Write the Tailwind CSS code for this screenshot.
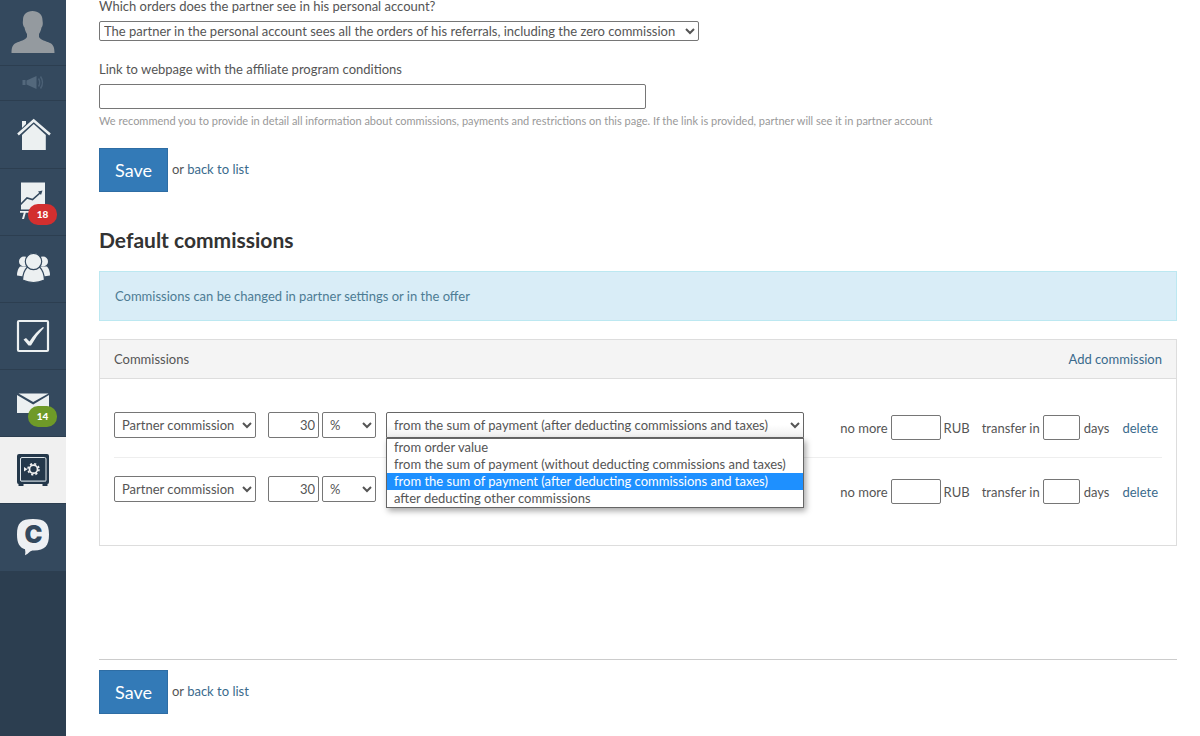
<!DOCTYPE html>
<html lang="en">
<head>
  <meta charset="UTF-8" />
  <meta name="viewport" content="width=device-width, initial-scale=1.0"/>
  <title>Affiliate program settings</title>
  <script src="https://cdn.jsdelivr.net/npm/@tailwindcss/browser@4"></script>
</head>
<body class="flex min-h-screen bg-white font-['Lato',sans-serif] text-[13px] leading-5 text-[#555]">

  <!-- Sidebar -->
  <nav class="w-[66px] shrink-0 bg-[#2c3e50]" aria-label="Main menu">
    <a href="#" aria-label="Profile" class="block h-[66px] border-b border-[#2c3e50] bg-[#34495e]">
      <svg class="h-[65px] w-[66px]" viewBox="0 0 66 65" fill="#949a9f">
        <path d="M32.500 11c-6 0-9.500 3.500-9.500 9 0 1-.3 2-.2 3 .2 2 .8 3.500 1.700 4.500.5 3 1.500 5 2.500 6.500v3c-1.500 3-7 4-11 6-3 1.500-4.500 4-4.500 10h43c0-6-1.500-8.500-4.500-10-4-2-9.500-3-11-6v-3c1-1.500 2-3.500 2.500-6.500.9-1 1.300-2.500 1.300-4.500 0-1-.3-2-.3-3 0-5.500-4-9-10-9z"/>
      </svg>
    </a>
    <a href="#" aria-label="News" class="block h-[35px] border-b border-[#2c3e50] bg-[#34495e]">
      <svg class="h-[34px] w-[66px]" viewBox="0 0 66 34" fill="#53687c">
        <path d="M22.500 14h3v5h-3zM26.500 14.500l10-4.500v13l-10-4.500z"/>
        <path d="M38.500 12.500q2.500 4 0 8M40.500 10.500q4 6 0 12" fill="none" stroke="#4b6075" stroke-width="1.500"/>
      </svg>
    </a>
    <a href="#" aria-label="Home" class="block h-[68px] border-b border-[#2c3e50] bg-[#34495e]">
      <svg class="h-[66px] w-[66px]" viewBox="0 1 66 66" fill="#ecf0f1">
        <path d="M22 21h4v3l-4 4z"/>
        <path d="M22 35L33.700 24 45.800 35V50H22z"/>
        <path d="M18 34.500L33.700 20.500 50 34.500" fill="none" stroke="#ecf0f1" stroke-width="2.500"/>
      </svg>
    </a>
    <a href="#" aria-label="Statistics, 18 new" class="relative block h-[67px] border-b border-[#2c3e50] bg-[#34495e]">
      <svg class="h-[66px] w-[66px]" viewBox="0 1 66 66">
        <path d="M21 14.500h24v27H21zM20 43h14v1.800H20zM24 44h2l-2 7h-2z" fill="#ecf0f1"/>
        <path d="M20.500 36.500L27 30l5.500 1.500L40 25" fill="none" stroke="#34495e" stroke-width="1.600"/>
        <path d="M38 23.500l4.500-1-1.500 4.500z" fill="#34495e"/>
      </svg>
      <span class="absolute top-[35px] left-7 h-[21px] w-[29px] rounded-[10px] bg-[#d32f2f] text-center text-[10px] leading-[21px] font-black text-white">18</span>
    </a>
    <a href="#" aria-label="Users" class="block h-[67px] border-b border-[#2c3e50] bg-[#34495e]">
      <svg class="h-[66px] w-[66px]" viewBox="0 1 66 66" fill="#ecf0f1">
        <circle cx="24" cy="26.500" r="5"/>
        <circle cx="43" cy="26.500" r="5"/>
        <path d="M20 31.500h7v10.500l-10-1.500q0-6 3-9zM47 31.500h-7v10.500l10-1.500q0-6-3-9z"/>
        <g stroke="#34495e" stroke-width="1.200">
          <path d="M27 32.500h13q4 4 4.500 12.500-11 5-22 0 .5-8.500 4.500-12.500z"/>
          <circle cx="33.500" cy="26.500" r="8.200"/>
        </g>
      </svg>
    </a>
    <a href="#" aria-label="Tasks" class="block h-[67px] border-b border-[#2c3e50] bg-[#34495e]">
      <svg class="h-[66px] w-[66px]" viewBox="0 1 66 66" fill="#ecf0f1">
        <rect x="18" y="19" width="30" height="30" rx="1" fill="none" stroke="#ecf0f1" stroke-width="2.200"/>
        <path d="M23.500 37.500l2.500-1.500 3.500 3.500q6-9.500 13.500-14.500l1 .8q-7.500 7.500-13 17.700h-2.500z"/>
      </svg>
    </a>
    <a href="#" aria-label="Messages, 14 new" class="relative block h-[67px] border-b border-[#2c3e50] bg-[#34495e]">
      <svg class="h-[66px] w-[66px]" viewBox="0 1 66 66" fill="#ecf0f1">
        <path d="M18.500 24.500h30L33.200 33z"/>
        <path d="M17 26l16.200 9.500L49 26V44H17z"/>
      </svg>
      <span class="absolute top-[36px] left-7 h-[21px] w-[29px] rounded-[10px] bg-[#6f9a28] text-center text-[10px] leading-[21px] font-black text-white">14</span>
    </a>
    <a href="#" aria-label="Finance" aria-current="page" class="block h-[67px] border-b border-[#2c3e50] bg-[#f0f0f0]">
      <svg class="h-[66px] w-[66px]" viewBox="0 1 66 66">
        <path d="M19 18h28q2 0 2 2v26q0 2-1.500 2v2h-5v-2h-19v2h-5v-2q-1.500 0-1.500-2V20q0-2 2-2z" fill="#24384b"/>
        <rect x="20.500" y="21.500" width="25.500" height="24" rx="1.500" fill="none" stroke="#dfe6ea" stroke-width="1"/>
        <path d="M21 45h24.500" stroke="#8d9ba7" stroke-width="1.600"/>
        <circle cx="33.500" cy="33.200" r="4" fill="none" stroke="#f0f0f0" stroke-width="1.700"/>
        <circle cx="33.500" cy="33.200" r="5.500" fill="none" stroke="#f0f0f0" stroke-width="1.600" stroke-dasharray="2.160 2.160"/>
        <path d="M24 31l3.500 2.200L24 35.500z" fill="#f0f0f0"/>
      </svg>
    </a>
    <a href="#" aria-label="Chat" class="block h-[67px] bg-[#34495e]">
      <svg class="h-[66px] w-[66px]" viewBox="0 1 66 66">
        <path d="M33 16c12 0 16 4 16 15.500S45 47 34 47.500c-2.500 0-3.500.5-5 2-1 1-2.300 2-4 2.700.5-2 .5-4 0-6-5.500-1.700-8-6-8-14.700C17 20 21 16 33 16z" fill="#eef0f3"/>
        <text x="33.500" y="40" text-anchor="middle" class="font-['Inter'] text-[24px] font-black" fill="#34495e">C</text>
      </svg>
    </a>
  </nav>

  <!-- Main Content -->
  <main class="min-w-0 flex-1 pr-[23px] pl-[33px]">
    <form>
      <label for="visibility" class="-mt-1 block">Which orders does the partner see in his personal account?</label>
      <select id="visibility" class="mt-[5px] block h-5 w-[600px] rounded-[2px] border border-[#767676]">
        <option>The partner in the personal account sees all the orders of his referrals, including the zero commission</option>
      </select>

      <label for="link" class="mt-[18px] block">Link to webpage with the affiliate program conditions</label>
      <input id="link" type="text" class="mt-[5px] block h-[25px] w-full max-w-[547px] rounded-[2px] border border-[#767676] px-2"/>
      <p class="mt-[2px] text-[11px] text-[#999]">We recommend you to provide in detail all information about commissions, payments and restrictions on this page. If the link is provided, partner will see it in partner account</p>

      <div class="mt-[17px] flex items-start gap-1">
        <button type="button" class="h-11 w-[69px] border border-[#2e6da4] bg-[#337ab7] text-lg text-white">Save</button>
        <span class="mt-[11px]">or <a href="#" class="text-[#3a6a8c]">back to list</a></span>
      </div>

      <h2 class="mt-[38px] text-[21px] leading-5 font-bold text-[#333]">Default commissions</h2>
      <div class="mt-[21px] border border-[#bce8f1] bg-[#d9edf7] px-[15px] py-[14px] text-[#4d7c94]">Commissions can be changed in partner settings or in the offer</div>

      <!-- Commissions panel -->
      <section class="mt-[18px] border border-[#ddd]">
        <header class="flex justify-between border-b border-[#ddd] bg-[#f4f4f4] px-[14px] py-[9px]">
          <span>Commissions</span>
          <a href="#" class="text-[#3a6a8c]">Add commission</a>
        </header>

        <div class="px-[14px] pt-[15px] pb-6">
          <div class="flex items-start justify-between border-b border-[#eee] pt-[18px] pb-[17px]">
            <div class="flex">
              <select aria-label="Commission type" class="h-[26px] w-[142px] rounded-[2px] border border-[#767676] px-[3px]">
                <option>Partner commission</option>
              </select>
              <input aria-label="Commission size" type="text" value="30" class="ml-3 h-[26px] w-[51px] rounded-[2px] border border-[#767676] px-[3px] text-right"/>
              <select aria-label="Unit" class="ml-[3px] h-[26px] w-[54px] rounded-[2px] border border-[#767676] px-[3px]">
                <option>%</option>
              </select>
              <div class="relative ml-[10px]">
                <select aria-label="Commission base" class="block h-[26px] w-[418px] rounded-t-[2px] border border-[#666] bg-linear-to-b from-white from-50% to-[#eee] px-[3px]">
                  <option>from the sum of payment (after deducting commissions and taxes)</option>
                </select>
                <ul role="listbox" class="absolute top-full left-0 z-10 w-full border border-[#666] bg-white leading-[17px] whitespace-nowrap shadow-[2px_3px_6px_rgba(0,0,0,0.35)]">
                  <li role="option" class="px-[7px]">from order value</li>
                  <li role="option" class="px-[7px]">from the sum of payment (without deducting commissions and taxes)</li>
                  <li role="option" aria-selected="true" class="bg-[#1e90ff] px-[7px] text-white">from the sum of payment (after deducting commissions and taxes)</li>
                  <li role="option" class="px-[7px]">after deducting other commissions</li>
                </ul>
              </div>
            </div>
            <div class="mt-[3px] mr-1 flex items-center">
              <label for="limit1">no more</label>
              <input id="limit1" type="text" class="ml-[3px] h-[25px] w-[50px] rounded-[2px] border border-[#767676] px-1"/>
              <span class="ml-[3px]">RUB</span>
              <label for="days1" class="ml-3">transfer in</label>
              <input id="days1" type="text" class="ml-[3px] h-[25px] w-[37px] rounded-[2px] border border-[#767676] px-1"/>
              <span class="ml-1">days</span>
              <a href="#" class="ml-[13px] text-[#3a6a8c]">delete</a>
            </div>
          </div>

          <div class="flex items-start justify-between pt-[18px] pb-[17px]">
            <div class="flex">
              <select aria-label="Commission type" class="h-[26px] w-[142px] rounded-[2px] border border-[#767676] px-[3px]">
                <option>Partner commission</option>
              </select>
              <input aria-label="Commission size" type="text" value="30" class="ml-3 h-[26px] w-[51px] rounded-[2px] border border-[#767676] px-[3px] text-right"/>
              <select aria-label="Unit" class="ml-[3px] h-[26px] w-[54px] rounded-[2px] border border-[#767676] px-[3px]">
                <option>%</option>
              </select>
            </div>
            <div class="mt-[3px] mr-1 flex items-center">
              <label for="limit2">no more</label>
              <input id="limit2" type="text" class="ml-[3px] h-[25px] w-[50px] rounded-[2px] border border-[#767676] px-1"/>
              <span class="ml-[3px]">RUB</span>
              <label for="days2" class="ml-3">transfer in</label>
              <input id="days2" type="text" class="ml-[3px] h-[25px] w-[37px] rounded-[2px] border border-[#767676] px-1"/>
              <span class="ml-1">days</span>
              <a href="#" class="ml-[13px] text-[#3a6a8c]">delete</a>
            </div>
          </div>
        </div>
      </section>

      <div class="mt-[113px] flex items-start gap-1 border-t border-[#ccc] pt-[10px]">
        <button type="button" class="h-11 w-[69px] border border-[#2e6da4] bg-[#337ab7] text-lg text-white">Save</button>
        <span class="mt-[11px]">or <a href="#" class="text-[#3a6a8c]">back to list</a></span>
      </div>
    </form>
  </main>

</body>
</html>
